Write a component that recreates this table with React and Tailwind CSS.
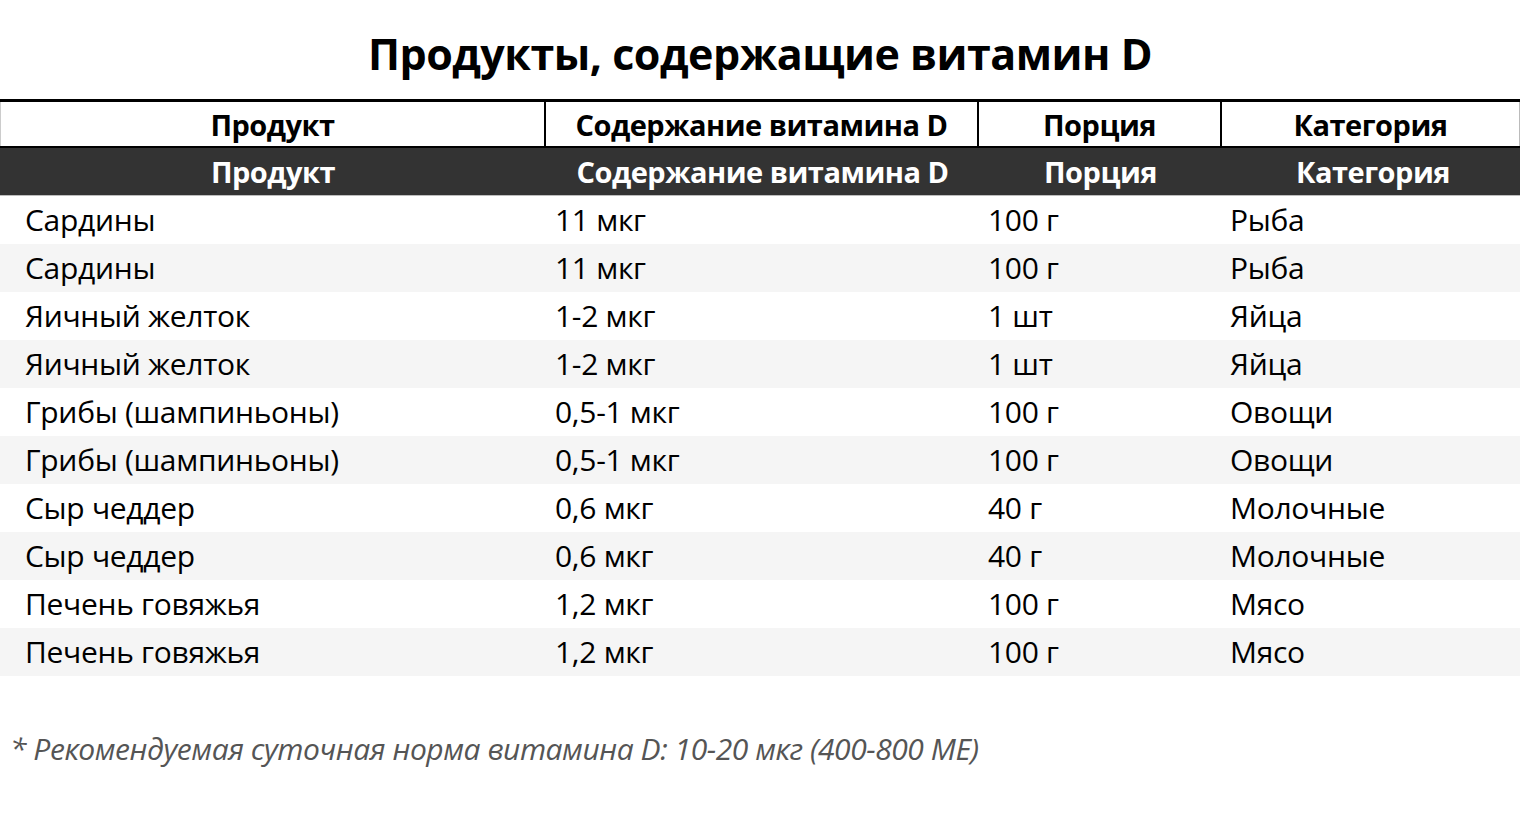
import React from "react";

const rows = [
  ["Сардины", "11 мкг", "100 г", "Рыба"],
  ["Сардины", "11 мкг", "100 г", "Рыба"],
  ["Яичный желток", "1-2 мкг", "1 шт", "Яйца"],
  ["Яичный желток", "1-2 мкг", "1 шт", "Яйца"],
  ["Грибы (шампиньоны)", "0,5-1 мкг", "100 г", "Овощи"],
  ["Грибы (шампиньоны)", "0,5-1 мкг", "100 г", "Овощи"],
  ["Сыр чеддер", "0,6 мкг", "40 г", "Молочные"],
  ["Сыр чеддер", "0,6 мкг", "40 г", "Молочные"],
  ["Печень говяжья", "1,2 мкг", "100 г", "Мясо"],
  ["Печень говяжья", "1,2 мкг", "100 г", "Мясо"],
];

const headers = ["Продукт", "Содержание витамина D", "Порция", "Категория"];
const cols = "grid grid-cols-[546px_433px_243px_298px]";

export default function App() {
  return (
    <div className="w-[1520px] h-[820px] bg-white text-black font-['Open_Sans',sans-serif] overflow-hidden">
      <div className="h-[99px] flex items-center justify-center pt-[8px]">
        <h1 className="text-[43px] font-bold tracking-[-0.5px] leading-none">Продукты, содержащие витамин D</h1>
      </div>
      <div className={`${cols} h-[49px] border-t-[3px] border-black border-b-[2px] border-b-black bg-white`}>
        {headers.map((h, i) => (
          <div
            key={i}
            className={`flex items-center justify-center text-[29px] font-bold tracking-[-0.5px] leading-none pt-[1px] ${i < 3 ? "border-r-[2px] border-black" : "border-r border-r-[#bbb]"} ${i === 0 ? "border-l border-l-[#ccc]" : ""}`}
          >
            {h}
          </div>
        ))}
      </div>
      <div className={`${cols} h-[48px] bg-[#333333] border-b border-b-[#bdbdbd] text-white`}>
        {headers.map((h, i) => (
          <div key={i} className={`flex items-center justify-center text-[29px] font-bold tracking-[-0.5px] leading-none ${i === 3 ? "pl-[4px]" : ""}`}>
            {h}
          </div>
        ))}
      </div>
      {rows.map((r, ri) => (
        <div key={ri} className={`${cols} h-[48px] ${ri % 2 === 1 ? "bg-[#f5f5f5]" : "bg-white"}`}>
          {r.map((c, ci) => (
            <div
              key={ci}
              className={`flex items-center text-[30px] leading-none tracking-[-0.3px] ${ci === 0 ? "pl-[25px]" : ci === 3 ? "pl-[8px]" : "pl-[9px]"}`}
            >
              {c}
            </div>
          ))}
        </div>
      ))}
      <div className="pt-[50px] pl-[10px] text-[30px] leading-[45px] italic text-[#555555] tracking-[-0.45px]">
        * Рекомендуемая суточная норма витамина D: 10-20 мкг (400-800 МЕ)
      </div>
    </div>
  );
}
